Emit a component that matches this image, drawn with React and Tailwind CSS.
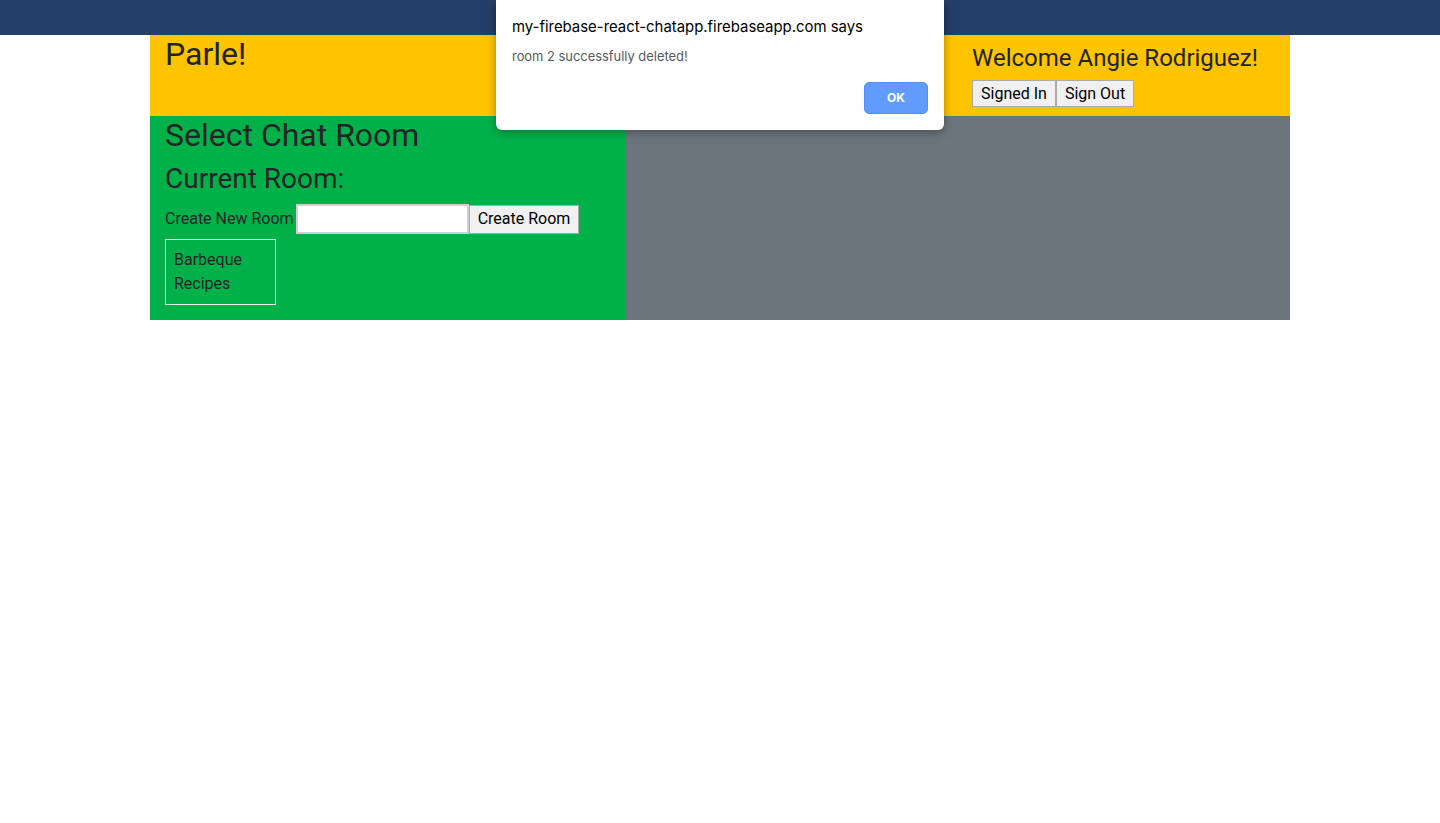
export default function App() {
  return (
    <div className="relative min-h-[823px] bg-white font-['Roboto','Noto_Sans',sans-serif] text-[#212529]">
      <div className="h-[35px] bg-[#233e68]" />

      <div className="mx-auto w-[1140px]">
        <header className="flex h-[81px] justify-between bg-[#ffc400]">
          <div className="px-[15px]">
            <h1 className="text-[32px] leading-[38px] font-normal">Parle!</h1>
          </div>
          <div className="w-[333px] px-[15px] pt-[9px]">
            <h2 className="mb-[7px] text-[24px] leading-[29px] font-normal">Welcome Angie Rodriguez!</h2>
            <div className="flex">
              <button className="h-[27px] w-[84px] border border-[#a9a9a9] bg-[#f0f0f0] text-[16px] text-black">Signed In</button>
              <button className="h-[27px] w-[78px] border border-[#a9a9a9] bg-[#f0f0f0] text-[16px] text-black">Sign Out</button>
            </div>
          </div>
        </header>

        <main className="flex">
          <section className="w-[475px] bg-[#00b14a] px-[15px] pb-[15px]">
            <h1 className="mb-[8px] text-[32px] leading-[38px] font-normal">Select Chat Room</h1>
            <h3 className="mb-[8px] text-[28px] leading-[34px] font-normal">Current Room:</h3>
            <form className="flex items-center text-[16px]">
              <label className="w-[131px] whitespace-nowrap">Create New Room</label>
              <input className="h-[30px] w-[173px] border-2 border-[#d0d0d0] bg-white" />
              <button type="button" className="h-[29px] w-[110px] border border-[#a9a9a9] bg-[#f0f0f0] text-black">Create Room</button>
            </form>
            <ul className="mt-[5px]">
              <li className="w-[111px] border border-[#e8f8ee] px-[8px] py-[8px] text-[16px] leading-[24px]">Barbeque Recipes</li>
            </ul>
          </section>
          <section className="flex-1 bg-[#6c757d]" />
        </main>
      </div>

      <div className="absolute top-0 left-[496px] h-[130px] w-[448px] rounded-b-[6px] bg-white px-[16px] pt-[17px] shadow-[0_2px_10px_rgba(0,0,0,0.35)] font-['Inter','Liberation_Sans',sans-serif]">
        <p className="text-[14.9px] leading-[20px] text-black">my-firebase-react-chatapp.firebaseapp.com says</p>
        <p className="mt-[12px] text-[12.9px] leading-[16px] text-[#545b66]">room 2 successfully deleted!</p>
        <div className="mt-[17px] flex justify-end">
          <button className="h-[32px] w-[64px] rounded-[5px] border border-[#4f8ff7] bg-[#619bfb] text-[12px] font-bold text-white">OK</button>
        </div>
      </div>
    </div>
  )
}
